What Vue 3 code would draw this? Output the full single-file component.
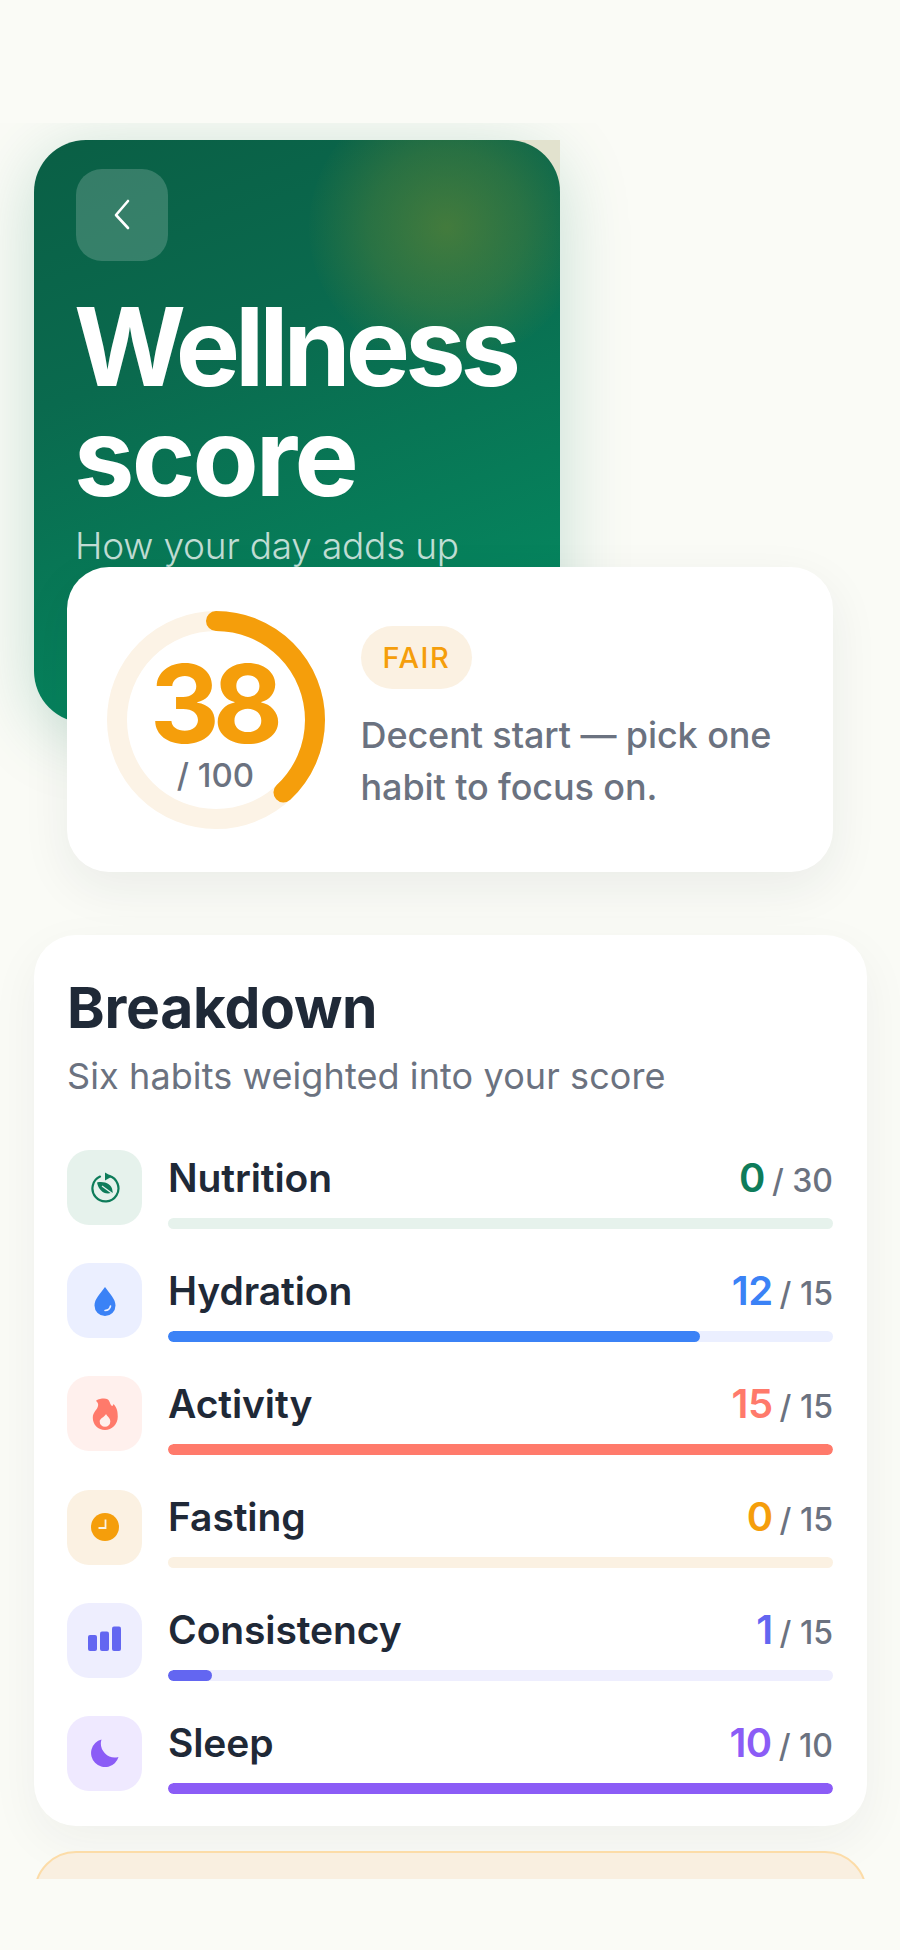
<script setup>
const habits = [
  { name: 'Nutrition', value: 0, max: 30, color: '#0e7c5a', track: '#e6f2ec', icon: 'leaf' },
  { name: 'Hydration', value: 12, max: 15, color: '#3b82f6', track: '#ebefff', icon: 'drop' },
  { name: 'Activity', value: 15, max: 15, color: '#ff7a6b', track: '#fff0ed', icon: 'flame' },
  { name: 'Fasting', value: 0, max: 15, color: '#f59e0b', track: '#fbf1e2', icon: 'clock' },
  { name: 'Consistency', value: 1, max: 15, color: '#6366f1', track: '#eeeefe', icon: 'bars' },
  { name: 'Sleep', value: 10, max: 10, color: '#8b5cf6', track: '#efe9ff', icon: 'moon' },
]

const score = 38
const radius = 99
const circumference = 2 * Math.PI * radius
const dash = `${(score / 100) * circumference} ${circumference}`
</script>

<template>
  <div class="screen">
    <main class="scroll">
      <section class="hero">
        <div class="corner"></div>
        <div class="hero-bg">
          <div class="blob"></div>
        </div>
        <div class="hero-content">
          <button class="back">
            <svg width="40" height="40" viewBox="0 0 40 40" fill="none" stroke="#fff" stroke-width="2.6" stroke-linecap="round" stroke-linejoin="round">
              <path d="M26 6 L14 20 L26 33" />
            </svg>
          </button>
          <h1><span class="line-1">Wellness</span> <span class="line-2">score</span></h1>
          <p class="hero-sub">How your day adds up</p>
        </div>
      </section>

      <section class="score-card">
        <div class="ring">
          <svg width="218" height="218" viewBox="0 0 218 218" fill="none">
            <circle cx="109" cy="109" :r="radius" stroke="#fcf3e6" stroke-width="20" />
            <circle cx="109" cy="109" :r="radius" stroke="#f59e0b" stroke-width="20" stroke-linecap="round"
              :stroke-dasharray="dash" transform="rotate(-90 109 109)" />
          </svg>
          <div class="ring-text">
            <div class="ring-score">{{ score }}</div>
            <div class="ring-max">/ 100</div>
          </div>
        </div>
        <div class="score-info">
          <span class="pill">FAIR</span>
          <p>Decent start — pick one habit to focus on.</p>
        </div>
      </section>

      <section class="breakdown">
        <h2>Breakdown</h2>
        <p class="breakdown-sub">Six habits weighted into your score</p>
        <div class="rows">
          <div v-for="h in habits" :key="h.name" class="row">
            <div class="icon" :style="{ background: h.track }">
              <svg v-if="h.icon === 'leaf'" width="32" height="32" viewBox="0 0 32 32" fill="none">
                <path d="M11 4.6 A13 13 0 1 0 20 3.9" :stroke="h.color" stroke-width="2.2" stroke-linecap="round" />
                <path d="M16 0.5 L23 4.5 L16 8.5 Z" :fill="h.color" />
                <path d="M8 10.5 C15 9 23 11.5 23.5 19 C24 21 23.5 21.5 22 21 C15 23 9.5 18 8 10.5 Z" :fill="h.color" />
                <path d="M13 14 L24 22" stroke="#e6f2ec" stroke-width="1.2" />
              </svg>
              <svg v-else-if="h.icon === 'drop'" width="32" height="32" viewBox="0 0 32 32">
                <path d="M16 2 C21 9 26.5 14 26.5 20.5 A10.5 10.5 0 0 1 5.5 20.5 C5.5 14 11 9 16 2 Z" :fill="h.color" />
                <path d="M16 25.5 C19 25.5 21 23.5 21.5 21" stroke="#ebefff" stroke-width="1.6" stroke-linecap="round" fill="none" />
              </svg>
              <svg v-else-if="h.icon === 'flame'" width="34" height="34" viewBox="0 0 32 32">
                <path d="M15 1.5 C21 1.5 20 6 22 8 C23 9 23.5 8 24 6.5 C27.5 10 28 14 28 18.5 C28 25.5 22.5 31 16 31 C9.5 31 4.5 26 4.5 19.5 C4.5 14 9 12 9.5 8 C10 6 8.5 4.5 7.5 3.5 C10 2 12.5 1.5 15 1.5 Z" :fill="h.color" />
                <path d="M17 16 C18 18.5 21 19.5 21 23 A5 5 0 0 1 11 23 C11 20 15.5 19 17 16 Z" fill="#fff0ed" />
              </svg>
              <svg v-else-if="h.icon === 'clock'" width="32" height="32" viewBox="0 0 32 32">
                <circle cx="16" cy="16" r="14" :fill="h.color" />
                <path d="M16.5 8.5 V17 H9.5" stroke="#fbf1e2" stroke-width="1.8" fill="none" />
              </svg>
              <svg v-else-if="h.icon === 'bars'" width="34" height="32" viewBox="0 0 34 32" :fill="h.color">
                <rect x="0" y="11" width="9" height="16" rx="2" />
                <rect x="12" y="7.5" width="9" height="19.5" rx="2" />
                <rect x="24" y="2.5" width="9" height="24.5" rx="2" />
              </svg>
              <svg v-else width="32" height="32" viewBox="0 0 32 32">
                <path d="M12.5 2.5 A14 14 0 1 0 29.5 20 A14 14 0 0 1 12.5 2.5 Z" :fill="h.color" />
              </svg>
            </div>
            <div class="row-body">
              <div class="row-head">
                <span class="row-name">{{ h.name }}</span>
                <span class="row-score">
                  <b :style="{ color: h.color }">{{ h.value }}</b>
                  <span class="row-max">/ {{ h.max }}</span>
                </span>
              </div>
              <div class="bar" :style="{ background: h.track }">
                <div class="fill" :style="{ width: (h.value / h.max) * 100 + '%', background: h.color }"></div>
              </div>
            </div>
          </div>
        </div>
      </section>

      <section class="next-card"></section>
    </main>
  </div>
</template>

<style>
html, body {
  margin: 0;
  background: #fafbf6;
}
</style>

<style scoped>
.screen {
  width: 900px;
  height: 1950px;
  padding-top: 123px;
  box-sizing: border-box;
  background: #fafbf6;
  font-family: Inter, "Liberation Sans", sans-serif;
}

.scroll {
  height: 1756px;
  overflow: hidden;
  padding: 17px 33.5px 0;
  box-sizing: border-box;
}

.hero {
  position: relative;
  width: 526px;
  height: 583px;
  border-radius: 52px;
  box-shadow: 0 12px 70px rgba(5, 120, 85, 0.22);
}

.corner {
  position: absolute;
  top: 0;
  right: 0;
  width: 60px;
  height: 60px;
  background: #e2e2ce;
}

.hero-bg {
  position: absolute;
  inset: 0;
  border-radius: 52px;
  overflow: hidden;
  background: linear-gradient(160deg, #0a5f45 0%, #0a6a4e 35%, #05875f 85%);
}

.blob {
  position: absolute;
  left: 275px;
  top: -50px;
  width: 275px;
  height: 275px;
  border-radius: 50%;
  background: radial-gradient(circle, rgba(105, 135, 50, 0.6) 0%, rgba(105, 135, 50, 0.32) 40%, rgba(105, 135, 50, 0) 72%);
}

.hero-content {
  position: relative;
  padding: 29px 34px 0 42.5px;
}

.back {
  display: flex;
  align-items: center;
  justify-content: center;
  width: 92px;
  height: 92px;
  padding: 0;
  border: none;
  border-radius: 26px;
  background: rgba(255, 255, 255, 0.18);
}

h1 {
  margin: 31px 0 0 -2px;
  width: 450px;
  font-size: 108px;
  line-height: 110px;
  font-weight: 700;
  letter-spacing: -5px;
  color: #fff;
}

.line-1,
.line-2 {
  display: block;
}

.line-2 {
  letter-spacing: -2.8px;
}

.hero-sub {
  margin: 11px 0 0 -1px;
  font-size: 37px;
  line-height: 46px;
  font-weight: 300;
  letter-spacing: -0.2px;
  color: rgba(255, 255, 255, 0.75);
  white-space: nowrap;
}

.score-card {
  position: relative;
  display: flex;
  align-items: center;
  gap: 36px;
  box-sizing: border-box;
  width: 766px;
  height: 305px;
  margin: -156px 0 0 33.5px;
  padding: 0 39.5px;
  border-radius: 42px;
  background: #fff;
  box-shadow: 0 16px 50px rgba(30, 40, 50, 0.07);
}

.ring {
  position: relative;
  flex: none;
  width: 218px;
  height: 218px;
}

.ring-text {
  position: absolute;
  inset: 0;
  display: flex;
  flex-direction: column;
  align-items: center;
  justify-content: center;
  padding-top: 15px;
  box-sizing: border-box;
}

.ring-score {
  margin-left: -5px;
  font-size: 108px;
  line-height: 90px;
  font-weight: 700;
  letter-spacing: -7px;
  color: #f59e0b;
}

.ring-max {
  margin-top: 6px;
  font-size: 33px;
  line-height: 40px;
  font-weight: 500;
  color: #6b7280;
}

.pill {
  display: inline-block;
  padding: 0 22px;
  height: 63px;
  line-height: 63px;
  border-radius: 32px;
  background: #fbf1e2;
  color: #f59e0b;
  font-size: 29px;
  font-weight: 500;
  letter-spacing: 1.5px;
}

.score-info p {
  margin: 20px 0 0;
  font-size: 36px;
  line-height: 52px;
  font-weight: 500;
  letter-spacing: -0.1px;
  color: #6b7280;
}

.breakdown {
  box-sizing: border-box;
  width: 833px;
  height: 891px;
  margin-top: 63px;
  padding: 37.5px 33.5px 0;
  border-radius: 42px;
  background: #fff;
  box-shadow: 0 16px 50px rgba(30, 40, 50, 0.05);
}

h2 {
  margin: 0;
  font-size: 57px;
  line-height: 70px;
  font-weight: 700;
  letter-spacing: -0.3px;
  color: #1f2937;
}

.breakdown-sub {
  margin: 10.5px 0 0;
  font-size: 36px;
  line-height: 46px;
  letter-spacing: 0.1px;
  color: #6b7280;
}

.rows {
  display: flex;
  flex-direction: column;
  gap: 34.7px;
  margin-top: 51px;
}

.row {
  display: flex;
  align-items: flex-start;
  gap: 26px;
}

.icon {
  flex: none;
  display: flex;
  align-items: center;
  justify-content: center;
  width: 75px;
  height: 75px;
  border-radius: 22px;
}

.row-body {
  flex: 1;
  margin-top: -1px;
}

.row-head {
  display: flex;
  justify-content: space-between;
  align-items: center;
  height: 56px;
  margin-bottom: 12.5px;
}

.row-name {
  font-size: 39px;
  font-weight: 600;
  letter-spacing: -0.1px;
  color: #1f2937;
}

.row-score b {
  font-size: 40px;
  font-weight: 600;
  letter-spacing: -0.5px;
}

.row-max {
  margin-left: 7px;
  font-size: 32px;
  font-weight: 500;
  color: #6b7280;
}

.bar {
  height: 11px;
  border-radius: 6px;
  overflow: hidden;
}

.fill {
  height: 100%;
  border-radius: 6px;
}

.next-card {
  box-sizing: border-box;
  width: 833px;
  height: 200px;
  margin-top: 25px;
  border: 2.5px solid #fcdca8;
  border-radius: 42px;
  background: #f9efe0;
}
</style>
